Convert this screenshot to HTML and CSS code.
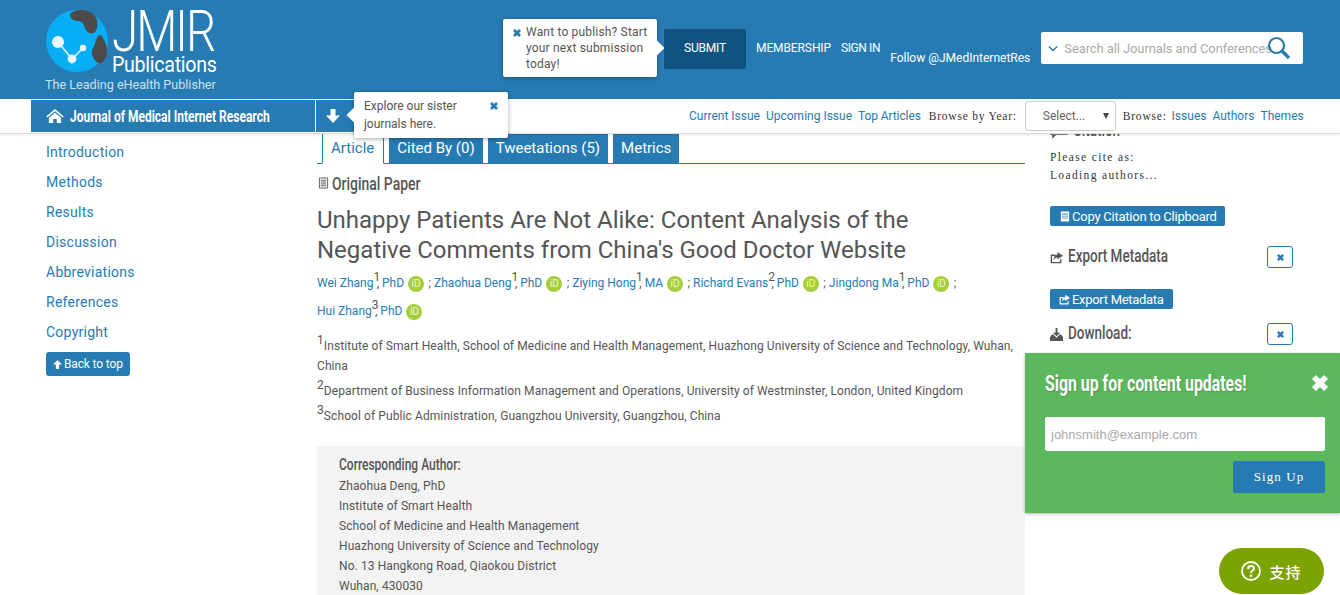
FILE: index.html
```html
<!DOCTYPE html>
<html lang="en">
<head>
<meta charset="utf-8">
<title>JMIR - Unhappy Patients Are Not Alike</title>
<link rel="stylesheet" href="styles.css">
</head>
<body>
<header class="site-header">
  <div class="topbar">
    <a class="logo">
      <svg class="logo-globe" viewBox="0 0 64 64" width="64" height="64" aria-hidden="true">
        <circle cx="32" cy="32" r="31" fill="#08aef5"/>
        <path fill="#4a4a4a" d="M25 5C28 1 38 0 42 2c5 1 9 5 10 9 1 5 0 11-3 13-4 1-8-1-9-5-1-3-2-6-6-7-4 0-9-1-9-7z"/>
        <path fill="#4a4a4a" d="M56 26c4 5 6 11 6 16 0 5-2 9-6 12-4 1-8-4-9-9-1-4 2-7 3-10 1-4 2-9 6-9z"/>
        <path d="M13 33l14 17 11-11" fill="none" stroke="#dff4fd" stroke-width="1.600"/>
        <circle cx="13" cy="33" r="6" fill="#e8f7fe"/><circle cx="27" cy="50" r="4.400" fill="#e8f7fe"/><circle cx="38" cy="39" r="3.200" fill="#e8f7fe"/>
      </svg>
      <span class="logo-words"><span class="logo-jmir">JMIR</span><span class="logo-pub">Publications</span></span>
      <span class="logo-tag">The Leading eHealth Publisher</span>
    </a>
    <div class="tip tip-publish">
      <svg class="ico-x" viewBox="1 1 8 8" width="8" height="8" aria-hidden="true"><path d="M1 3l2-2 2 2 2-2 2 2-2 2 2 2-2 2-2-2-2 2-2-2 2-2z" fill="#277bb3"/></svg>
      <p>Want to publish? Start your next submission today!</p>
    </div>
    <a class="btn-submit">SUBMIT</a>
    <a class="top-link link-member">MEMBERSHIP</a>
    <a class="top-link link-sign">SIGN IN</a>
    <a class="top-link link-follow">Follow @JMedInternetRes</a>
    <div class="search">
      <svg class="ico-chev" viewBox="0 0 12 8" width="10" height="7" aria-hidden="true"><path d="M1 1.500l5 5 5-5" fill="none" stroke="#277bb3" stroke-width="1.600"/></svg>
      <span class="search-ph">Search all Journals and Conferences</span>
      <svg class="ico-search" viewBox="0 0 24 24" width="24" height="24" aria-hidden="true"><circle cx="9.500" cy="9.500" r="7.500" fill="none" stroke="#277bb3" stroke-width="2.200"/><path d="M15 15l7 7" stroke="#277bb3" stroke-width="3.200"/></svg>
    </div>
  </div>
  <div class="navbar">
    <a class="journal">
      <svg viewBox="0 0 20 16" width="18" height="14" aria-hidden="true"><path fill="#fff" d="M10 0l10 8.500-1.200 1.300L10 2.600 1.200 9.800 0 8.500zM3 10l7-5.800 7 5.800v6h-5v-4.500H8V16H3z"/></svg>
      <span class="cond">Journal of Medical Internet Research</span>
    </a>
    <a class="journal-drop">
      <svg viewBox="0 0 14 14" width="14" height="14" aria-hidden="true"><path fill="#fff" d="M4.500 0h5v6.500H14L7 14 0 6.500h4.500z"/></svg>
    </a>
    <div class="tip tip-sister">
      <p>Explore our sister journals here.</p>
      <svg class="ico-x" viewBox="1 1 8 8" width="8" height="8" aria-hidden="true"><path d="M1 3l2-2 2 2 2-2 2 2-2 2 2 2-2 2-2-2-2 2-2-2 2-2z" fill="#277bb3"/></svg>
    </div>
    <nav class="nav-links">
      <a>Current Issue</a><a>Upcoming Issue</a><a class="tight">Top Articles</a>
      <span class="mono">Browse by Year:</span>
      <span class="select">Select...<i class="caret"></i></span>
      <span class="mono mono-browse">Browse:</span>
      <a>Issues</a><a>Authors</a><a>Themes</a>
    </nav>
  </div>
</header>

<div class="page">
  <aside class="toc">
    <a>Introduction</a><a>Methods</a><a>Results</a><a>Discussion</a><a>Abbreviations</a><a>References</a><a>Copyright</a>
    <span class="back-top"><svg viewBox="0 0 10 10" width="9" height="9" aria-hidden="true"><path fill="#fff" d="M3.200 10V5H0l5-5 5 5H6.800v5z"/></svg>Back to top</span>
  </aside>

  <main class="article">
    <ul class="tabs">
      <li class="tab active">Article</li><li class="tab">Cited By (0)</li><li class="tab">Tweetations (5)</li><li class="tab">Metrics</li>
    </ul>
    <h3 class="kind">
      <svg viewBox="0 0 12 12" width="11" height="12" aria-hidden="true"><path fill="none" stroke="#555" d="M1.500.5h9v11h-9z"/><path stroke="#555" d="M3 3h6M3 5h6M3 7h6M3 9h6"/></svg>
      <span class="cond">Original Paper</span>
    </h3>
    <h1 class="title">Unhappy Patients Are Not Alike: Content Analysis of the Negative Comments from China's Good Doctor Website</h1>
    <p class="authors">
      <a>Wei Zhang</a><sup>1</sup>, <a>PhD</a> <b class="orcid">iD</b> ; <a>Zhaohua Deng</a><sup>1</sup>, <a>PhD</a> <b class="orcid">iD</b> ; <a>Ziying Hong</a><sup>1</sup>, <a>MA</a> <b class="orcid">iD</b> ; <a>Richard Evans</a><sup>2</sup>, <a>PhD</a> <b class="orcid">iD</b> ; <a>Jingdong Ma</a><sup>1</sup>, <a>PhD</a> <b class="orcid">iD</b> ;<br>
      <a>Hui Zhang</a><sup>3</sup>, <a>PhD</a> <b class="orcid">iD</b>
    </p>
    <div class="affils">
      <p><sup>1</sup>Institute of Smart Health, School of Medicine and Health Management, Huazhong University of Science and Technology, Wuhan, China</p>
      <p><sup>2</sup>Department of Business Information Management and Operations, University of Westminster, London, United Kingdom</p>
      <p><sup>3</sup>School of Public Administration, Guangzhou University, Guangzhou, China</p>
    </div>
    <section class="corr">
      <h4 class="cond">Corresponding Author:</h4>
      <p>Zhaohua Deng, PhD</p>
      <p>Institute of Smart Health</p>
      <p>School of Medicine and Health Management</p>
      <p>Huazhong University of Science and Technology</p>
      <p>No. 13 Hangkong Road, Qiaokou District</p>
      <p>Wuhan, 430030</p>
    </section>
  </main>

  <aside class="side">
    <h3 class="side-h side-cite">
      <svg viewBox="0 0 18 16" width="18" height="16" aria-hidden="true"><path fill="none" stroke="#555" stroke-width="1.500" d="M1 1h16v10H6l-3 3v-3H1z"/></svg>
      <span class="cond">Citation</span>
    </h3>
    <p class="mono cite-line">Please cite as:</p>
    <p class="mono cite-line">Loading authors...</p>
    <span class="side-btn btn-copy"><svg viewBox="0 0 12 12" width="10" height="11" aria-hidden="true"><path fill="#fff" d="M1 0h10v12H1zm1.500 2.500v1h7v-1zm0 2.500v1h7V5zm0 2.500v1h7v-1z"/></svg>Copy Citation to Clipboard</span>
    <div class="side-row row-export">
      <h3 class="side-h">
        <svg viewBox="0 0 14 14" width="13" height="13" aria-hidden="true"><path fill="none" stroke="#555" stroke-width="1.500" d="M11.500 9v3.500h-10v-8H6"/><path fill="#555" d="M8 1l6 4-6 4V7C6 7 5 8 4 10c0-3 1-6 4-6z"/></svg>
        <span class="cond">Export Metadata</span>
      </h3>
      <span class="x-box"><svg class="ico-x" viewBox="1 1 8 8" width="7" height="7" aria-hidden="true"><path d="M1 3l2-2 2 2 2-2 2 2-2 2 2 2-2 2-2-2-2 2-2-2 2-2z" fill="#277bb3"/></svg></span>
    </div>
    <span class="side-btn btn-export"><svg viewBox="0 0 14 14" width="11" height="11" aria-hidden="true"><path fill="none" stroke="#fff" stroke-width="1.500" d="M11.500 9v3.500h-10v-8H6"/><path fill="#fff" d="M8 1l6 4-6 4V7C6 7 5 8 4 10c0-3 1-6 4-6z"/></svg>Export Metadata</span>
    <div class="side-row row-download">
      <h3 class="side-h">
        <svg viewBox="0 0 14 14" width="13" height="13" aria-hidden="true"><path fill="#555" d="M6 0h2v5h3L7 9 3 5h3zM2 7h1.500L7 10.500 10.500 7H12l2 3v4H0v-4z"/></svg>
        <span class="cond">Download:</span>
      </h3>
      <span class="x-box"><svg class="ico-x" viewBox="1 1 8 8" width="7" height="7" aria-hidden="true"><path d="M1 3l2-2 2 2 2-2 2 2-2 2 2 2-2 2-2-2-2 2-2-2 2-2z" fill="#277bb3"/></svg></span>
    </div>
  </aside>
</div>

<div class="signup">
  <div class="signup-head">
    <h2 class="cond">Sign up for content updates!</h2>
    <svg viewBox="1 1 8 8" width="16" height="16" aria-hidden="true"><path d="M1 3l2-2 2 2 2-2 2 2-2 2 2 2-2 2-2-2-2 2-2-2 2-2z" fill="#fff"/></svg>
  </div>
  <div class="signup-input">johnsmith@example.com</div>
  <span class="signup-btn">Sign Up</span>
</div>

<a class="support">
  <svg viewBox="0 0 20 20" width="20" height="20" aria-hidden="true"><circle cx="10" cy="10" r="9" fill="none" stroke="#fff" stroke-width="1.800"/><path d="M7 8c0-4 6-4 6-.500 0 2-3 2-3 4.500" fill="none" stroke="#fff" stroke-width="2"/><circle cx="10" cy="14.800" r="1.200" fill="#fff"/></svg>
  <span>支持</span>
</a>
</body>
</html>
```
FILE: styles.css
```css
* { box-sizing: border-box; }
html, body { margin: 0; height: 100%; }
body {
  position: relative;
  height: 595px;
  overflow: hidden;
  background: #fff;
  color: #555;
  font-family: Roboto, "Liberation Sans", sans-serif;
  font-size: 12px;
}
p, h1, h2, h3, h4, ul { margin: 0; padding: 0; }
a { color: #277bb3; text-decoration: none; }
svg { flex: none; }
.mono {
  font-family: "Liberation Serif", serif;
  font-size: 11.500px;
  letter-spacing: .78px;
  color: #333;
}
.cond {
  display: inline-block;
  width: max-content;
  white-space: nowrap;
  transform: scaleX(.75);
  transform-origin: left center;
}
.site-header {
  position: absolute;
  top: 0; left: 0; right: 0;
  z-index: 5;
  height: 134px;
  background: #fff;
  border-bottom: 1px solid #ddd;
  box-shadow: 0 1px 2px rgba(0,0,0,.1);
}
.topbar {
  display: flex;
  height: 99px;
  background: #277bb3;
  color: #fff;
}
.logo {
  position: relative;
  display: block;
  width: 172px;
  margin-left: 45px;
  flex: none;
}
.logo-globe { position: absolute; left: 0; top: 9px; }
.logo-words { position: absolute; left: 67px; top: 6px; display: block; color: #fff; }
.logo-jmir {
  display: block;
  font-size: 58px;
  font-weight: 300;
  line-height: 50px;
  letter-spacing: -2.500px;
  transform: scaleX(.82);
  transform-origin: left center;
}
.logo-pub {
  position: absolute;
  left: 0; top: 50px;
  font-size: 22px;
  line-height: 18px;
  letter-spacing: -.3px;
  transform: scaleX(.89);
  transform-origin: left center;
}
.logo-tag {
  position: absolute;
  left: 0; top: 77px;
  font-size: 12.600px;
  line-height: 16px;
  color: #c9e0ef;
  white-space: nowrap;
}
.tip {
  position: relative;
  display: flex;
  background: #fff;
  color: #555;
  border-radius: 2px;
  box-shadow: 0 1px 4px rgba(0,0,0,.35);
  font-size: 12px;
  line-height: 16px;
}
.tip::after {
  content: "";
  position: absolute;
  width: 12px; height: 12px;
  background: #fff;
  transform: rotate(45deg);
}
.tip-publish {
  flex: none;
  width: 154px; height: 58px;
  margin: 19px 0 0 286px;
  padding: 5px 6px 0 10px;
  gap: 5px;
  letter-spacing: .18px;
}
.tip-publish .ico-x { margin-top: 5px; }
.tip-publish::after { right: -5px; top: 23px; }
.btn-submit {
  flex: none;
  width: 82px; height: 40px;
  margin: 29px 0 0 7px;
  background: #0f5480;
  border-radius: 2px;
  color: #fff;
  text-align: center;
  line-height: 38px;
  letter-spacing: -.2px;
}
.top-link { flex: none; color: #fff; line-height: 14px; white-space: nowrap; }
.link-member { margin: 41px 0 0 10px; letter-spacing: -.1px; }
.link-sign { margin: 41px 0 0 10px; letter-spacing: -.4px; }
.link-follow { margin: 51px 0 0 10px; }
.search {
  flex: none;
  display: flex;
  align-items: center;
  position: relative;
  width: 262px; height: 32px;
  margin: 32px 0 0 11px;
  padding-left: 7px;
  background: #fff;
  border-radius: 2px;
  color: #aaa;
  font-size: 13px;
}
.search-ph { margin-left: 6px; white-space: nowrap; letter-spacing: -.1px; }
.ico-search { position: absolute; left: 226px; top: 4px; }
.navbar { display: flex; position: relative; height: 34px; padding: 1px 0 0 31px; }
.journal {
  display: flex;
  align-items: center;
  gap: 6px;
  flex: none;
  width: 284px; height: 32px;
  padding-left: 15px;
  overflow: hidden;
  background: #277bb3;
  color: #fff;
  font-weight: 700;
  font-size: 16px;
}
.journal-drop {
  display: flex;
  align-items: center;
  width: 38px; height: 32px;
  margin-left: 1px;
  padding-left: 10px;
  background: #277bb3;
}
.tip-sister {
  position: absolute;
  left: 354px; top: -7px;
  width: 154px; height: 46px;
  padding: 5px 10px;
  line-height: 18px;
  justify-content: space-between;
}
.tip-sister p { width: 110px; }
.tip-sister .ico-x { margin-top: 5px; }
.tip-sister::after { left: -5px; top: 17px; }
.nav-links {
  display: flex;
  align-items: center;
  position: absolute;
  left: 689px; top: 2px;
  height: 30px;
}
.nav-links a { margin-right: 6px; white-space: nowrap; }
.nav-links a.tight { letter-spacing: -.1px; }
.nav-links .mono { margin: 0 8px 0 2px; white-space: nowrap; }
.nav-links .mono-browse { margin-right: 5px; }
.select {
  position: relative;
  width: 91px; height: 30px;
  margin-right: 5px;
  padding: 7px 0 0 17px;
  border: 1px solid #ccc;
  border-radius: 3px;
  color: #666;
}
.caret {
  position: absolute;
  right: 6px; top: 11px;
  border-left: 3px solid transparent;
  border-right: 3px solid transparent;
  border-top: 6px solid #444;
}
.page { display: flex; height: 595px; }
.toc { flex: none; width: 317px; padding: 137px 0 0 46px; }
.toc a { display: block; height: 30px; line-height: 30px; font-size: 14px; letter-spacing: .25px; }
.back-top {
  display: inline-flex;
  align-items: center;
  gap: 2px;
  width: 84px; height: 24px;
  margin-top: 5px;
  padding-left: 7px;
  background: #277bb3;
  border-radius: 3px;
  color: #fff;
  letter-spacing: -.15px;
}
.article {
  flex: none;
  display: flex;
  flex-direction: column;
  width: 708px;
  height: 595px;
  padding-top: 133px;
}
.tabs {
  display: flex;
  list-style: none;
  gap: 5px;
  height: 31px;
  padding-left: 5px;
  border-bottom: 1px solid #277bb3;
}
.tab {
  height: 30px;
  padding: 0 8px;
  background: #277bb3;
  color: #fff;
  font-size: 15px;
  line-height: 31px;
  white-space: nowrap;
}
.tab.active {
  height: 31px;
  padding: 0 9px 0 8px;
  background: #fff;
  color: #277bb3;
  border: 1px solid #277bb3;
  border-bottom-color: #fff;
  border-top: 0;
}
.kind {
  display: flex;
  align-items: center;
  gap: 3px;
  height: 20px;
  margin: 9px 0 0 1px;
  font-size: 18px;
  font-weight: 500;
  color: #555;
}
.kind .cond { transform: scaleX(.775); }
.title {
  width: 640px;
  margin-top: 12px;
  font-size: 24px;
  font-weight: 400;
  line-height: 30px;
  color: #555;
}
.authors { margin-top: 4px; line-height: 28px; white-space: nowrap; }
sup { font-size: 12px; line-height: 0; position: relative; top: -1px; }
.authors sup { letter-spacing: -3.500px; }
.orcid {
  display: inline-block;
  width: 16px; height: 16px;
  border-radius: 50%;
  background: #a6ce39;
  color: #eef6d5;
  font-size: 10px;
  font-weight: 400;
  line-height: 16px;
  text-align: center;
  vertical-align: 0;
  margin: 0 1.500px 0 1px;
}
.affils { margin-top: 11px; letter-spacing: .09px; }
.affils p { line-height: 20px; margin-bottom: 5px; }
.corr {
  flex: 1;
  min-height: 0;
  margin-top: 15px;
  padding: 9px 0 0 22px;
  background: #f3f3f3;
  line-height: 20px;
  letter-spacing: .09px;
}
.corr h4 {
  display: block;
  margin-bottom: 1px;
  font-size: 16px;
  font-weight: 500;
  line-height: 20px;
  letter-spacing: 0;
}
.side { flex: none; width: 315px; padding: 120px 0 0 25px; }
.side-h {
  display: flex;
  align-items: center;
  gap: 5px;
  font-size: 18px;
  font-weight: 500;
  color: #555;
  line-height: 22px;
}
.side-h .cond { position: relative; top: -1px; }
.side-cite { height: 22px; }
.cite-line { line-height: 18px; letter-spacing: 1.350px; }
.side-cite + .cite-line { margin-top: 6px; }
.side-btn {
  display: flex;
  align-items: center;
  width: max-content;
  gap: 2px;
  height: 20px;
  background: #277bb3;
  border-radius: 2px;
  color: #fff;
  font-size: 13px;
}
.btn-copy { margin-top: 22px; padding: 0 8px 0 10px; letter-spacing: -.24px; }
.btn-export { margin-top: 21px; padding: 0 9px 0 9px; letter-spacing: -.3px; }
.side-row { display: flex; align-items: center; justify-content: space-between; width: 243px; height: 22px; }
.row-export { margin-top: 20px; }
.row-download { margin-top: 14px; }
.x-box {
  display: flex;
  align-items: center;
  justify-content: center;
  width: 26px; height: 22px;
  border: 1px solid #277bb3;
  border-radius: 3px;
}
.signup {
  position: absolute;
  left: 1025px; top: 353px;
  z-index: 6;
  width: 315px; height: 160px;
  padding: 18px 12px 0 20px;
  background: #5cb85c;
  box-shadow: 0 1px 3px rgba(0,0,0,.3);
}
.signup-head { display: flex; align-items: center; justify-content: space-between; height: 24px; }
.signup-head h2 {
  margin-right: -80px;
  font-size: 22px;
  font-weight: 700;
  color: #fff;
  transform: scaleX(.72);
  text-shadow: 1px 1px 2px rgba(0,0,0,.2);
}
.signup-input {
  width: 280px; height: 34px;
  margin-top: 22px;
  padding-left: 6px;
  background: #fff;
  border-radius: 2px;
  color: #aaa;
  font-family: "Liberation Sans", sans-serif;
  font-size: 13px;
  line-height: 35px;
}
.signup-btn {
  display: block;
  width: 92px; height: 32px;
  margin: 10px 0 0 188px;
  background: #277bb3;
  border-radius: 2px;
  color: #fff;
  font-family: "Liberation Serif", serif;
  font-size: 13px;
  letter-spacing: 1.100px;
  line-height: 32px;
  text-align: center;
}
.support {
  position: absolute;
  left: 1219px; top: 548px;
  z-index: 6;
  display: flex;
  align-items: center;
  justify-content: center;
  gap: 8px;
  width: 105px; height: 46px;
  background: #7ba400;
  border-radius: 23px;
  color: #fff;
  font-family: "Noto Sans CJK SC", sans-serif;
  font-size: 15px;
  font-weight: 500;
  letter-spacing: 1px;
}
```
